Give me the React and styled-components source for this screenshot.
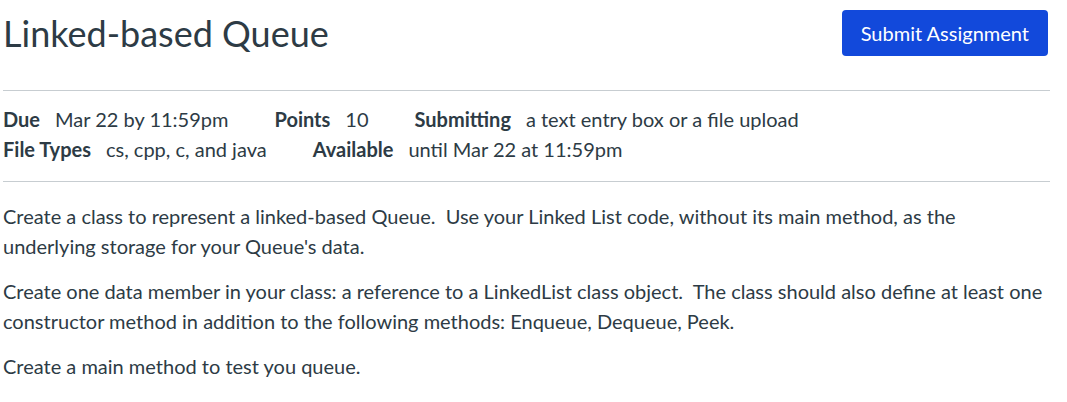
import React from "react";
import styled, { createGlobalStyle } from "styled-components";

const GlobalStyle = createGlobalStyle`
  body {
    margin: 0;
    background: #ffffff;
    font-family: Lato, "Open Sans", "Liberation Sans", sans-serif;
    color: #2d3b45;
  }
`;

const Page = styled.main`
  width: 1047px;
  padding-left: 3px;
`;

const Header = styled.header`
  display: flex;
  justify-content: space-between;
  align-items: center;
  padding: 10px 2px 34px 0;
  border-bottom: 1px solid #c7cdd1;
`;

const Title = styled.h1`
  margin: 0;
  font-size: 36px;
  font-weight: 400;
  line-height: 44px;
`;

const SubmitButton = styled.button`
  height: 46px;
  padding: 0 19px;
  border: none;
  border-radius: 4px;
  background: #1249db;
  color: #ffffff;
  font-family: inherit;
  font-size: 20px;
  cursor: pointer;
`;

const Details = styled.section`
  padding: 13px 0 17px;
  border-bottom: 1px solid #c7cdd1;
`;

const DetailRow = styled.div`
  display: flex;
  font-size: 20px;
  line-height: 30px;
`;

const Detail = styled.div`
  margin-right: 46px;
  white-space: nowrap;
`;

const Label = styled.span`
  font-weight: 700;
  margin-right: 15px;
`;

const Description = styled.div`
  padding-top: 19px;
`;

const Paragraph = styled.p`
  margin: 0 0 15px;
  font-size: 20px;
  line-height: 30px;
`;

const details = [
  [
    ["Due", "Mar 22 by 11:59pm"],
    ["Points", "10"],
    ["Submitting", "a text entry box or a file upload"],
  ],
  [
    ["File Types", "cs, cpp, c, and java"],
    ["Available", "until Mar 22 at 11:59pm"],
  ],
];

export default function App() {
  return (
    <Page>
      <GlobalStyle />
      <Header>
        <Title>Linked-based Queue</Title>
        <SubmitButton>Submit Assignment</SubmitButton>
      </Header>
      <Details>
        {details.map((row, i) => (
          <DetailRow key={i}>
            {row.map(([label, value]) => (
              <Detail key={label}>
                <Label>{label}</Label>
                {value}
              </Detail>
            ))}
          </DetailRow>
        ))}
      </Details>
      <Description>
        <Paragraph>
          Create a class to represent a linked-based Queue.&nbsp; Use your Linked List code, without its main
          method, as the underlying storage for your Queue's data.
        </Paragraph>
        <Paragraph>
          Create one data member in your class: a reference to a LinkedList class object.&nbsp; The class should
          also define at least one constructor method in addition to the following methods: Enqueue, Dequeue,
          Peek.
        </Paragraph>
        <Paragraph>Create a main method to test you queue.</Paragraph>
      </Description>
    </Page>
  );
}
